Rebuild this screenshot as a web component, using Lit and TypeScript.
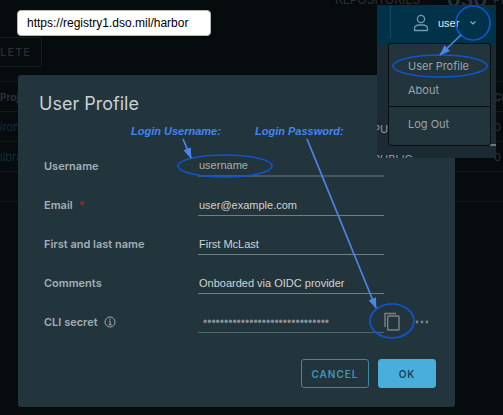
import { LitElement, html, css, svg } from "lit";
import { customElement } from "lit/decorators.js";

interface Field {
  id: string;
  label: string;
  value: string;
  required?: boolean;
}

const FIELDS: Field[] = [
  { id: "username", label: "Username", value: "username" },
  { id: "email", label: "Email", value: "user@example.com", required: true },
  { id: "fullname", label: "First and last name", value: "First McLast" },
  { id: "comments", label: "Comments", value: "Onboarded via OIDC provider" },
];

/* Dimmed project list that sits behind the dialog. */
@customElement("project-list")
export class ProjectList extends LitElement {
  static styles = css`
    :host {
      display: block;
      overflow: hidden;
      color: #2a3136;
      font: 12px/16px Inter, "Liberation Sans", sans-serif;
    }
    .stats {
      display: flex;
      justify-content: flex-end;
      align-items: flex-end;
      height: 8px;
      margin-right: -12px;
    }
    .stats span {
      width: 112px;
    }
    .stats strong {
      width: 46px;
      font-size: 20px;
      line-height: 16px;
    }
    .stats .last {
      width: 22px;
    }
    button {
      display: block;
      height: 30px;
      width: 72px;
      margin: 29px 0 14px -30px;
      padding: 0 10px;
      text-align: right;
      border: 1px solid #161c20;
      border-radius: 3px;
      background: none;
      color: #2a3136;
      font: 500 11px Inter, sans-serif;
      letter-spacing: 1px;
    }
    table {
      width: 100%;
      border-collapse: collapse;
    }
    th,
    td {
      height: 29px;
      padding: 0;
      border-top: 1px solid #11171a;
      text-align: left;
      font-size: 11px;
      white-space: nowrap;
    }
    th {
      font-size: 10px;
    }
    th:last-child,
    td:last-child {
      width: 9px;
      max-width: 9px;
      overflow: hidden;
    }
    a {
      color: #0c2f3d;
      text-decoration: none;
    }
  `;

  render() {
    return html`
      <div class="stats"><span>REPOSITORIES</span><strong>030</strong><span class="last">PR</span></div>
      <button type="button">DELETE</button>
      <table>
        <thead><tr><th>Proj</th><th>Ch</th></tr></thead>
        <tbody>
          <tr><td><a href="#iron">iron</a></td><td>0</td></tr>
          <tr><td><a href="#libr">libra</a></td><td>0</td></tr>
          <tr><td></td><td></td></tr>
          <tr><td></td><td></td></tr>
        </tbody>
      </table>
    `;
  }
}

@customElement("user-menu")
export class UserMenu extends LitElement {
  static styles = css`
    :host {
      display: block;
      overflow: hidden;
      position: relative;
      background: #1b2a33;
      font-family: Inter, "Liberation Sans", sans-serif;
    }
    header {
      display: flex;
      align-items: center;
      height: 40px;
      background: #00334a;
    }
    .rule {
      width: 1px;
      height: 32px;
      margin: 0 22px 6px 13px;
      background: #1c4a5c;
    }
    .person {
      flex: none;
      margin-bottom: 4px;
    }
    header button {
      display: flex;
      align-items: center;
      gap: 11px;
      margin: 0 0 4px 9px;
      padding: 0;
      border: 0;
      background: none;
      color: #e4e6e8;
      font: 11px/16px "Liberation Sans", sans-serif;
    }
    .behind {
      position: absolute;
      left: -4px;
      top: 116px;
      display: flex;
      flex-direction: column;
      gap: 14px;
      color: #8d989e;
      font-size: 11px;
      line-height: 16px;
    }
    .alert {
      position: absolute;
      right: 4px;
      top: 60px;
      height: 76px;
      border-right: 1px dashed #4a2428;
    }
    .scroll {
      position: absolute;
      right: 0;
      top: 139px;
      width: 6px;
      height: 2px;
      background: #6d767b;
    }
    nav {
      position: relative;
      box-sizing: border-box;
      margin: -2px 5px 12px 11px;
      padding-top: 14px;
      border: 1px solid #080e12;
      border-radius: 3px;
      background: #22343c;
    }
    a {
      display: block;
      padding: 0 19px 8px;
      color: #98a5ad;
      font-size: 11px;
      line-height: 16px;
      text-decoration: none;
      white-space: nowrap;
    }
    .logout {
      padding-top: 9px;
      padding-bottom: 13px;
      border-top: 1px solid #080e12;
    }
  `;

  render() {
    return html`
      <div class="behind"><span>PU</span><span>PUBLIC</span></div>
      <div class="alert"></div>
      <div class="scroll"></div>
      <header>
        <span class="rule"></span>
        <svg class="person" width="16" height="18" viewBox="0 0 16 18" fill="none" stroke="#7698a7" stroke-width="1.3">
          <circle cx="8" cy="5" r="3.6" />
          <path d="M1.500 16.500v-2.200c0-2 2.500-3.300 4.500-3.300h4c2 0 4.500 1.300 4.500 3.300v2.200z" stroke-linejoin="round" />
        </svg>
        <button type="button">
          user
          <svg width="6" height="4" viewBox="0 0 6 4" fill="none" stroke="#8fa9b4" stroke-width="1.200">
            <path d="M.5 .5 3 3 5.500 .5" />
          </svg>
        </button>
      </header>
      <nav>
        <a href="#profile">User Profile</a>
        <a href="#about">About</a>
        <a class="logout" href="#logout">Log Out</a>
      </nav>
    `;
  }
}

@customElement("profile-dialog")
export class ProfileDialog extends LitElement {
  static styles = css`
    :host {
      display: block;
      box-sizing: border-box;
      padding: 18px 19px 19px 21px;
      border-radius: 3px;
      background: #22343c;
      color: #a3afb5;
      font-family: Inter, "Liberation Sans", sans-serif;
    }
    h1 {
      margin: 0 0 23px;
      color: #c9d0d4;
      font-size: 18px;
      line-height: 22px;
      font-weight: 400;
    }
    .row {
      display: grid;
      grid-template-columns: 154px 1fr 52px;
      align-items: end;
      height: 39px;
      padding-left: 5px;
    }
    label {
      display: flex;
      align-items: center;
      gap: 6px;
      height: 22px;
      font-size: 11px;
      font-weight: 600;
    }
    .star {
      color: #a3261b;
    }
    input {
      box-sizing: border-box;
      width: 100%;
      height: 22px;
      padding: 0 1px;
      border: 0;
      border-bottom: 1px solid #6f7f86;
      border-radius: 0;
      outline: 0;
      background: none;
      color: #d3d3d0;
      font: 11px "Liberation Sans", sans-serif;
    }
    #username {
      color: #a9aeae;
      border-bottom: 2px solid #47565d;
    }
    #secret {
      padding-left: 5px;
      border-color: #54646b;
      color: #848e93;
      font-size: 12px;
    }
    .tools {
      display: flex;
      align-items: center;
      gap: 15px;
      height: 22px;
    }
    .tools button {
      display: flex;
      padding: 0;
      border: 0;
      background: none;
    }
    footer {
      display: flex;
      justify-content: flex-end;
      gap: 9px;
      margin-top: 26px;
    }
    footer button {
      box-sizing: border-box;
      height: 29px;
      width: 68px;
      padding: 0;
      border: 1px solid #3c88a8;
      border-radius: 3px;
      background: none;
      color: #4294b5;
      font: 600 10px Inter, sans-serif;
      letter-spacing: 1px;
    }
    footer .ok {
      width: 58px;
      border-color: #49aedb;
      background: #49aedb;
      color: #15455c;
    }
  `;

  render() {
    return html`
      <h1>User Profile</h1>
      <form>
        ${FIELDS.map(
          (f) => html`
            <div class="row">
              <label for=${f.id}>${f.label}${f.required ? html`<span class="star">*</span>` : ""}</label>
              <input id=${f.id} type="text" .value=${f.value} />
            </div>
          `,
        )}
        <div class="row">
          <label for="secret">
            CLI secret
            <svg width="12" height="12" viewBox="0 0 12 12" fill="none" stroke="#9ba7ad">
              <circle cx="6" cy="6" r="5" />
              <path d="M4.800 5.200H6.200V8.700M4.500 8.700H7.700M5.500 3.200H6.700" />
            </svg>
          </label>
          <input id="secret" type="password" .value=${"x".repeat(30)} />
          <div class="tools">
            <button type="button" aria-label="Copy secret">
              <svg width="16" height="20" viewBox="0 0 16 20" fill="none" stroke="#7b8285" stroke-width="1.400">
                <path d="M1 15V1.500H12" />
                <rect x="3.700" y="4" width="11.300" height="14" rx=".6" />
              </svg>
            </button>
            <button type="button" aria-label="More actions">
              <svg width="14" height="4" viewBox="0 0 14 4" fill="#7b8285">
                <circle cx="2" cy="2" r="1.400" />
                <circle cx="7" cy="2" r="1.400" />
                <circle cx="12" cy="2" r="1.400" />
              </svg>
            </button>
          </div>
        </div>
        <footer>
          <button type="button">CANCEL</button>
          <button type="button" class="ok">OK</button>
        </footer>
      </form>
    `;
  }
}

const ARROWS = [
  { x1: 461, y1: 35, x2: 440, y2: 55 },
  { x1: 183, y1: 139, x2: 191, y2: 158 },
  { x1: 307, y1: 139, x2: 376, y2: 308 },
];

const RINGS = [
  { cx: 473, cy: 23, rx: 17, ry: 17 },
  { cx: 440, cy: 66, rx: 47, ry: 11 },
  { cx: 225, cy: 166, rx: 47, ry: 11 },
  { cx: 392, cy: 321, rx: 22, ry: 17 },
];

@customElement("app-root")
export class AppRoot extends LitElement {
  static styles = css`
    :host {
      display: block;
      position: relative;
      min-height: 100vh;
      overflow: hidden;
      background: #060b0e;
    }
    project-list {
      position: absolute;
      inset: 0;
    }
    profile-dialog {
      position: relative;
      margin: 75px 48px 8px 18px;
    }
    .address {
      position: absolute;
      left: 17px;
      top: 10px;
      box-sizing: border-box;
      width: 194px;
      height: 26px;
      padding: 0 9px;
      border: 1px solid #b7b7b7;
      border-radius: 4px;
      background: #fff;
      color: #000;
      font: 12px "Liberation Sans", sans-serif;
    }
    user-menu {
      position: absolute;
      top: 5px;
      right: 7px;
      width: 119px;
      height: 153px;
    }
    .marks {
      position: absolute;
      left: 0;
      top: 0;
      pointer-events: none;
    }
    .note {
      position: absolute;
      top: 124px;
      left: 131px;
      color: #4285f4;
      font: italic bold 11px/14px "Liberation Sans", sans-serif;
      white-space: nowrap;
    }
    .password {
      left: 255px;
    }
  `;

  render() {
    return html`
      <project-list></project-list>
      <profile-dialog></profile-dialog>
      <input class="address" type="text" aria-label="Registry address" .value=${"https://registry1.dso.mil/harbor"} />
      <user-menu></user-menu>
      <span class="note">Login Username:</span>
      <span class="note password">Login Password:</span>
      <svg class="marks" width="503" height="415" fill="none">
        <defs>
          <marker id="head" markerUnits="userSpaceOnUse" markerWidth="11" markerHeight="8" refX="10" refY="4" orient="auto">
            <path d="M0 0 11 4 0 8z" fill="#4a86e8" />
          </marker>
        </defs>
        ${RINGS.map((r) => svg`<ellipse cx=${r.cx} cy=${r.cy} rx=${r.rx} ry=${r.ry} stroke="#1155cc" stroke-width="1.700" />`)}
        ${ARROWS.map((a) => svg`<line x1=${a.x1} y1=${a.y1} x2=${a.x2} y2=${a.y2} stroke="#4a86e8" stroke-width="1.700" marker-end="url(#head)" />`)}
      </svg>
    `;
  }
}
